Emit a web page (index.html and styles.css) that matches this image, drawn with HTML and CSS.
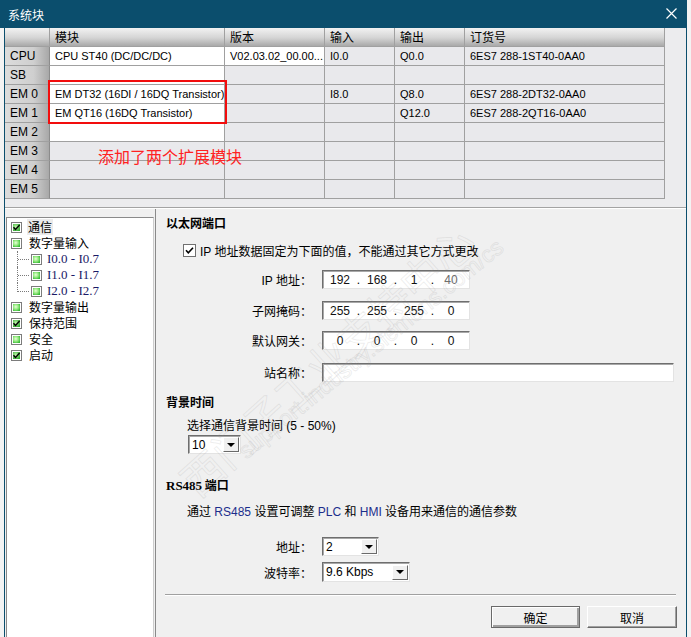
FILE: index.html
```html
<!DOCTYPE html>
<html lang="zh">
<head>
<meta charset="utf-8">
<title>系统块</title>
<link rel="stylesheet" href="styles.css">
</head>
<body>
<svg class="defs" width="0" height="0" aria-hidden="true">
  <defs>
    <radialGradient id="gr" cx="40%" cy="40%" r="70%">
      <stop offset="0" stop-color="#e6ffd6"/>
      <stop offset="0.55" stop-color="#8ee67a"/>
      <stop offset="1" stop-color="#34b834"/>
    </radialGradient>
    <radialGradient id="grc" cx="40%" cy="40%" r="70%">
      <stop offset="0" stop-color="#bff5a8"/>
      <stop offset="1" stop-color="#2fa82f"/>
    </radialGradient>
  </defs>
</svg>
<div class="top">
  <div class="titlebar">
    <span class="title">系统块</span>
    <svg class="close" width="11" height="11" viewBox="0 0 11 11"><path d="M0.5 0.5 L10.5 10.5 M10.5 0.5 L0.5 10.5" stroke="#fff" stroke-width="1.2" fill="none"/></svg>
  </div>
  <div class="strip"></div>
</div>
<div class="body">
  <div class="strip"></div>
  <div class="win">
    <div class="tablearea">
      <div class="grid">
        <div class="hd"></div><div class="hd">模块</div><div class="hd">版本</div><div class="hd">输入</div><div class="hd">输出</div><div class="hd">订货号</div>
        <div class="rh">CPU</div><div class="w">CPU ST40 (DC/DC/DC)</div><div class="w">V02.03.02_00.00...</div><div>I0.0</div><div>Q0.0</div><div>6ES7 288-1ST40-0AA0</div>
        <div class="rh">SB</div><div class="w"></div><div></div><div></div><div></div><div></div>
        <div class="rh">EM 0</div><div class="w">EM DT32 (16DI / 16DQ Transistor)</div><div></div><div>I8.0</div><div>Q8.0</div><div>6ES7 288-2DT32-0AA0</div>
        <div class="rh">EM 1</div><div class="w">EM QT16 (16DQ Transistor)</div><div></div><div></div><div>Q12.0</div><div>6ES7 288-2QT16-0AA0</div>
        <div class="rh">EM 2</div><div class="w"></div><div></div><div></div><div></div><div></div>
        <div class="rh">EM 3</div><div></div><div></div><div></div><div></div><div></div>
        <div class="rh">EM 4</div><div></div><div></div><div></div><div></div><div></div>
        <div class="rh">EM 5</div><div></div><div></div><div></div><div></div><div></div>
      </div>
      <div class="redbox"></div>
      <div class="note">添加了两个扩展模块</div>
    </div>
    <div class="lower">
      <div class="tree">
        <div class="ti"><svg class="ic" width="11" height="11" viewBox="0 0 11 11"><rect x="0.5" y="0.5" width="10" height="10" fill="#fff" stroke="#7c7c7c"/><rect x="2" y="2" width="7" height="7" fill="url(#grc)"/><path d="M2.5 5.2 L4.5 7.4 L8.6 3" stroke="#000" stroke-width="1.4" fill="none"/></svg><span class="tt sel">通信</span></div>
        <div class="ti"><svg class="ic" width="11" height="11" viewBox="0 0 11 11"><rect x="0.5" y="0.5" width="10" height="10" fill="#fff" stroke="#7c7c7c"/><rect x="2" y="2" width="7" height="7" fill="url(#gr)"/></svg><span class="tt">数字量输入</span></div>
        <div class="ti child"><span class="elbow"></span><svg class="ic" width="11" height="11" viewBox="0 0 11 11"><rect x="0.5" y="0.5" width="10" height="10" fill="#fff" stroke="#7c7c7c"/><rect x="2" y="2" width="7" height="7" fill="url(#gr)"/></svg><span class="ct">I0.0 - I0.7</span></div>
        <div class="ti child"><span class="elbow"></span><svg class="ic" width="11" height="11" viewBox="0 0 11 11"><rect x="0.5" y="0.5" width="10" height="10" fill="#fff" stroke="#7c7c7c"/><rect x="2" y="2" width="7" height="7" fill="url(#gr)"/></svg><span class="ct">I1.0 - I1.7</span></div>
        <div class="ti child"><span class="elbow last"></span><svg class="ic" width="11" height="11" viewBox="0 0 11 11"><rect x="0.5" y="0.5" width="10" height="10" fill="#fff" stroke="#7c7c7c"/><rect x="2" y="2" width="7" height="7" fill="url(#gr)"/></svg><span class="ct">I2.0 - I2.7</span></div>
        <div class="ti"><svg class="ic" width="11" height="11" viewBox="0 0 11 11"><rect x="0.5" y="0.5" width="10" height="10" fill="#fff" stroke="#7c7c7c"/><rect x="2" y="2" width="7" height="7" fill="url(#gr)"/></svg><span class="tt">数字量输出</span></div>
        <div class="ti"><svg class="ic" width="11" height="11" viewBox="0 0 11 11"><rect x="0.5" y="0.5" width="10" height="10" fill="#fff" stroke="#7c7c7c"/><rect x="2" y="2" width="7" height="7" fill="url(#grc)"/><path d="M2.5 5.2 L4.5 7.4 L8.6 3" stroke="#000" stroke-width="1.4" fill="none"/></svg><span class="tt">保持范围</span></div>
        <div class="ti"><svg class="ic" width="11" height="11" viewBox="0 0 11 11"><rect x="0.5" y="0.5" width="10" height="10" fill="#fff" stroke="#7c7c7c"/><rect x="2" y="2" width="7" height="7" fill="url(#gr)"/></svg><span class="tt">安全</span></div>
        <div class="ti"><svg class="ic" width="11" height="11" viewBox="0 0 11 11"><rect x="0.5" y="0.5" width="10" height="10" fill="#fff" stroke="#7c7c7c"/><rect x="2" y="2" width="7" height="7" fill="url(#grc)"/><path d="M2.5 5.2 L4.5 7.4 L8.6 3" stroke="#000" stroke-width="1.4" fill="none"/></svg><span class="tt">启动</span></div>
      </div>
      <div class="splitv"></div>
      <div class="pane">
        <div class="wm">
          <div class="wm1">西门子工业支持中心</div>
          <div class="wm2">support.industry.siemens.com/cs</div>
        </div>
        <div class="h">以太网端口</div>
        <div class="chk">
          <svg width="13" height="13" viewBox="0 0 13 13"><rect x="0.5" y="0.5" width="12" height="12" fill="#fff" stroke="#707070"/><path d="M3 6.3 L5.3 8.8 L10 3.8" stroke="#000" stroke-width="1.6" fill="none"/></svg>
          <span class="ctext">IP 地址数据固定为下面的值，不能通过其它方式更改</span>
        </div>
        <div class="frow r1"><span class="lbl">IP 地址：</span><div class="ip"><span class="seg">192</span><span class="dot">.</span><span class="seg">168</span><span class="dot">.</span><span class="seg">1</span><span class="dot">.</span><span class="seg dim">40</span></div></div>
        <div class="frow r2"><span class="lbl">子网掩码：</span><div class="ip"><span class="seg">255</span><span class="dot">.</span><span class="seg">255</span><span class="dot">.</span><span class="seg">255</span><span class="dot">.</span><span class="seg">0</span></div></div>
        <div class="frow r3"><span class="lbl">默认网关：</span><div class="ip"><span class="seg">0</span><span class="dot">.</span><span class="seg">0</span><span class="dot">.</span><span class="seg">0</span><span class="dot">.</span><span class="seg">0</span></div></div>
        <div class="frow r4"><span class="lbl">站名称：</span><div class="txt"></div></div>
        <div class="h h2">背景时间</div>
        <div class="para p1">选择通信背景时间 (5 - 50%)</div>
        <div class="dd dd10"><span>10</span><span class="ddb"><span class="tri"></span></span></div>
        <div class="h h3"><span class="serif">RS485</span> 端口</div>
        <div class="para p2">通过 <span class="blue">RS485</span> 设置可调整 <span class="blue">PLC</span> 和 <span class="blue">HMI</span> 设备用来通信的通信参数</div>
        <div class="frow r5"><span class="lbl">地址：</span><div class="dd ddaddr"><span>2</span><span class="ddb"><span class="tri"></span></span></div></div>
        <div class="frow r6"><span class="lbl">波特率：</span><div class="dd ddbaud"><span>9.6 Kbps</span><span class="ddb"><span class="tri"></span></span></div></div>
        <div class="sep"></div>
        <div class="btns">
          <div class="btn def">确定</div>
          <div class="btn">取消</div>
        </div>
      </div>
    </div>
  </div>
  <div class="strip"></div>
</div>
</body>
</html>
```
FILE: styles.css
```css
* { box-sizing: border-box; }
html, body { margin: 0; padding: 0; }
body {
  width: 691px;
  height: 637px;
  overflow: hidden;
  background: #f0f0f0;
  font-family: "Liberation Sans", "Noto Sans CJK SC", sans-serif;
  font-size: 12px;
  color: #000;
}
.defs { position: absolute; width: 0; height: 0; }

.top { display: flex; height: 28px; }
.titlebar {
  width: 687px;
  height: 28px;
  background: #0b4e6d;
  display: flex;
  align-items: center;
  justify-content: space-between;
  padding: 0 10px 0 8px;
  color: #fff;
}
.title { font-family: "Noto Sans CJK SC", sans-serif; font-size: 12px; }
.close { display: block; margin-top: -1px; }
.strip { width: 4px; background: #f3f3f3; }

.body { display: flex; height: 609px; }
.win {
  width: 683px;
  border-left: 1px solid #0b4e6d;
  border-right: 1px solid #0b4e6d;
  display: flex;
  flex-direction: column;
}

/* module table */
.tablearea {
  height: 180px;
  position: relative;
  background: #ececee;
  border-bottom: 1px solid #a3a3a3;
}
.grid {
  display: grid;
  grid-template-columns: 45px 175px 100px 70px 70px 200px;
  grid-auto-rows: 19px;
  width: 660px;
  font-size: 11px;
}
.grid > div {
  border-right: 1px solid #a0a0a0;
  border-bottom: 1px solid #a0a0a0;
  padding-left: 5px;
  line-height: 18px;
  white-space: nowrap;
  overflow: hidden;
  background: #e9e9ec;
}
.grid > .hd {
  background: linear-gradient(#f2f2f2, #d4d4d4 55%, #a9a9a9);
  font-family: "Noto Sans CJK SC", sans-serif;
  font-size: 12px;
  line-height: 18px;
}
.grid > .rh {
  background: linear-gradient(to right, #dcdcdc, #cfcfcf 65%, #a8a8a8);
  border-right-color: #8c8c8c;
  font-size: 12px;
}
.grid > .w { background: #fff; }

.redbox {
  position: absolute;
  left: 43px;
  top: 52px;
  width: 179px;
  height: 44px;
  border: 2px solid #f20d0d;
}
.note {
  position: absolute;
  left: 93px;
  top: 118px;
  font-family: "Noto Sans CJK SC", sans-serif;
  font-size: 16px;
  line-height: 20px;
  color: #f22;
}

/* lower area */
.lower {
  flex: 1;
  display: flex;
  border-top: 1px solid #fff;
  background: #f0f0f0;
  overflow: hidden;
}
.tree {
  width: 148px;
  margin: 8px 0 0 1px;
  background: #fff;
  border: 1px solid #8a8a8a;
  border-right-color: #cdcdcd;
  border-bottom: none;
  padding-top: 1px;
  font-family: "Noto Sans CJK SC", sans-serif;
}
.ti {
  height: 16px;
  display: flex;
  align-items: center;
  padding-left: 4px;
}
.ic { display: block; flex: none; }
.tt { margin-left: 6px; line-height: 16px; padding: 0 1px; }
.tt.sel { background: #ebebeb; margin-left: 5px; }
.ti.child { padding-left: 10px; }
.elbow {
  width: 13px;
  height: 16px;
  align-self: flex-start;
  border-left: 1px dotted #7a7a7a;
  background: repeating-linear-gradient(to right, #7a7a7a 0 1px, transparent 1px 2px) left 8px / 100% 1px no-repeat;
  margin-right: 1px;
}
.elbow.last { height: 9px; }
.ct {
  margin-left: 5px;
  font-family: "Liberation Serif", serif;
  font-size: 13px;
  color: #1a1a66;
}
.splitv {
  width: 2px;
  border-right: 1px solid #8a8a8a;
}

/* right pane */
.pane {
  width: 530px;
  position: relative;
  padding-left: 10px;
  display: flex;
  flex-direction: column;
  align-items: flex-start;
  font-family: "Liberation Sans", "Noto Sans CJK SC", sans-serif;
}
.wm {
  position: absolute;
  left: 0; top: 0; right: 0; bottom: 0;
  pointer-events: none;
  overflow: hidden;
}
.wm1, .wm2 {
  position: absolute;
  white-space: nowrap;
  color: transparent;
  -webkit-text-stroke: 1px rgba(150, 150, 150, 0.16);
}
.wm1 {
  left: 170px; top: 150px;
  font-family: "Noto Sans CJK SC", sans-serif;
  font-size: 42px;
  transform: translate(-50%, -50%) rotate(-42deg);
}
.wm2 {
  left: 215px; top: 140px;
  font-family: "Liberation Sans", sans-serif;
  font-size: 23px;
  transform: translate(-50%, -50%) rotate(-39deg);
}
.h {
  font-weight: bold;
  height: 16px;
  line-height: 16px;
  margin-top: 6px;
  font-family: "Noto Sans CJK SC", sans-serif;
}
.h2 { margin-top: 12px; }
.h3 { margin-top: 23px; }
.serif { font-family: "Liberation Serif", serif; font-size: 13px; }
.chk {
  display: flex;
  align-items: center;
  height: 16px;
  margin: 11px 0 0 17px;
}
.chk svg { display: block; }
.ctext { margin-left: 4px; }
.frow { display: flex; align-items: center; }
.r1 { margin-top: 12px; }
.r2 { margin-top: 12px; }
.r3 { margin-top: 11px; }
.r4 { margin-top: 13px; }
.r5 { margin-top: 17px; }
.r6 { margin-top: 6px; }
.lbl { width: 146px; text-align: right; margin-right: 10px; }
.ip, .txt, .dd {
  height: 19px;
  background: #fff;
  border: 1px solid;
  border-color: #6e6e6e #e3e3e3 #e3e3e3 #6e6e6e;
  box-shadow: inset 1px 1px 0 #a8a8a8;
}
.ip {
  width: 148px;
  display: flex;
  align-items: center;
  padding-left: 1px;
}
.seg { width: 32px; text-align: center; color: #111; }
.seg.dim { color: #6a6a6a; }
.dot { width: 5px; text-align: center; }
.txt { width: 352px; }
.para { height: 16px; line-height: 16px; margin-left: 21px; }
.p1 { margin-top: 8px; }
.p2 { margin-top: 11px; }
.blue { color: #1c2e8c; }
.dd {
  display: flex;
  align-items: center;
  justify-content: space-between;
  padding-left: 3px;
}
.dd10 { width: 53px; margin: 1px 0 0 22px; }
.ddaddr { width: 57px; }
.ddbaud { width: 88px; height: 20px; }
.ddb {
  width: 16px;
  height: 15px;
  margin-right: 1px;
  background: #f0f0f0;
  border: 1px solid;
  border-color: #fff #6a6a6a #6a6a6a #fff;
  display: flex;
  align-items: center;
  justify-content: center;
}
.tri {
  width: 0;
  height: 0;
  border-left: 4px solid transparent;
  border-right: 4px solid transparent;
  border-top: 4px solid #000;
}
.sep {
  width: 511px;
  margin: 12px 0 0 -1px;
  border-top: 1px solid #a0a0a0;
  border-bottom: 1px solid #fff;
}
.btns {
  align-self: stretch;
  display: flex;
  justify-content: flex-end;
  gap: 7px;
  padding-right: 9px;
  margin-top: 10px;
}
.btn {
  width: 90px;
  height: 22px;
  display: flex;
  align-items: center;
  justify-content: center;
  background: #f0f0f0;
  border: 1px solid;
  border-color: #fff #6a6a6a #6a6a6a #fff;
  box-shadow: inset -1px -1px 0 #a0a0a0;
  font-family: "Noto Sans CJK SC", sans-serif;
}
.btn.def {
  width: 89px;
  border-color: #6a6a6a;
  box-shadow: inset 1px 1px 0 #fff, inset -2px -2px 0 #a0a0a0;
}
```
